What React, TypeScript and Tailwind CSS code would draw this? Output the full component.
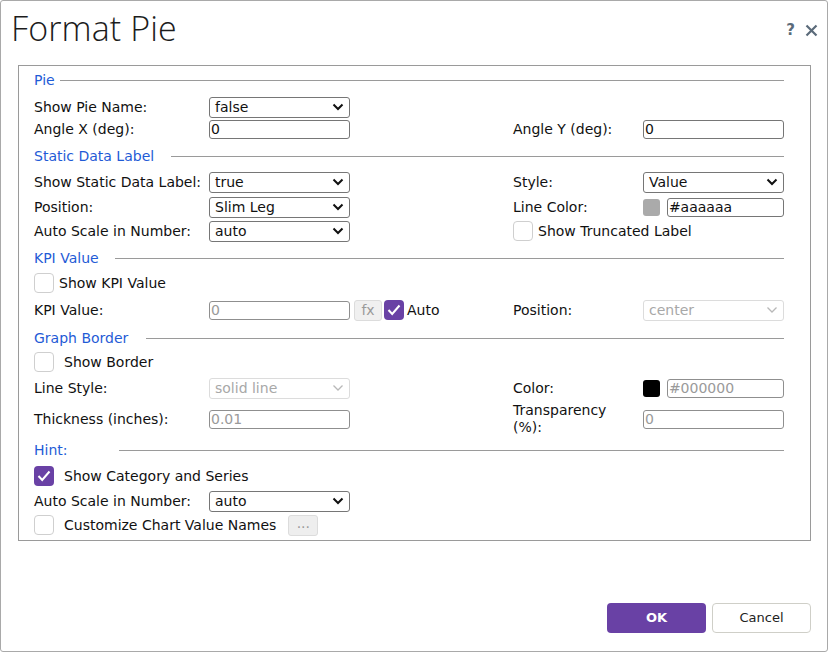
import React from 'react';

// ─── Små byggstenar ──────────────────────────────────────────────────────────
function Chevron({ disabled }: { disabled?: boolean }) {
  return (
    <svg width="12" height="8" viewBox="0 0 12 8" className="shrink-0">
      <path
        d="M1.5 1.5 L6 6 L10.5 1.5"
        fill="none"
        stroke={disabled ? '#b8b8b8' : '#111'}
        strokeWidth={disabled ? 1.3 : 2}
      />
    </svg>
  );
}

function Select({ value, disabled }: { value: string; disabled?: boolean }) {
  return (
    <div
      className={`flex h-[21px] w-[141px] items-center justify-between rounded-[3px] border pl-[5px] pr-[5px] ${
        disabled ? 'border-[#dcdcdc] text-[#a8a8a8]' : 'border-[#767676] text-[#111]'
      }`}
    >
      <span>{value}</span>
      <Chevron disabled={disabled} />
    </div>
  );
}

function Input({ value, disabled, w = 'w-[141px]' }: { value: string; disabled?: boolean; w?: string }) {
  return (
    <div
      className={`flex h-[19px] ${w} items-center rounded-[3px] border pl-[1px] ${
        disabled ? 'border-[#8f8f8f] text-[#9a9a9a]' : 'border-[#767676] text-[#111]'
      }`}
    >
      {value}
    </div>
  );
}

function Check({ checked }: { checked?: boolean }) {
  if (checked) {
    return (
      <div className="flex h-[20px] w-[20px] shrink-0 items-center justify-center rounded-[4px] bg-[#6941a5]">
        <svg width="14" height="12" viewBox="0 0 14 12">
          <path d="M1.5 6 L5.2 10 L12.5 1.5" fill="none" stroke="white" strokeWidth="2" />
        </svg>
      </div>
    );
  }
  return <div className="h-[20px] w-[20px] shrink-0 rounded-[4px] border border-[#cfcfcf] bg-white" />;
}

function Header({ label, w }: { label: string; w: string }) {
  return (
    <div className="flex h-[22px] items-center">
      <span className={`${w} shrink-0 text-[#1f5bd6]`}>{label}</span>
      <div className="h-px flex-1 bg-[#9a9a9a]" />
    </div>
  );
}

function Row({
  mt,
  label,
  control,
  rLabel,
  rControl,
  h = 'h-[22px]',
}: {
  mt: string;
  label?: React.ReactNode;
  control?: React.ReactNode;
  rLabel?: React.ReactNode;
  rControl?: React.ReactNode;
  h?: string;
}) {
  return (
    <div className={`${mt} ${h} grid grid-cols-[175px_141px_163px_130px_141px] items-center`}>
      <div>{label}</div>
      <div>{control}</div>
      <div />
      <div className="leading-[17px]">{rLabel}</div>
      <div>{rControl}</div>
    </div>
  );
}

// ─── Dialog ──────────────────────────────────────────────────────────────────
export default function App() {
  return (
    <div className="relative h-[652px] w-[828px] overflow-hidden rounded-[3px] border border-[#a9a9a9] bg-white font-['DejaVu_Sans',sans-serif] text-[14px] text-[#111]">
      {/* Titel */}
      <div className="flex h-[64px] items-start justify-between pl-[10px] pr-[9px] pt-[2px]">
        <h1 className="font-['Open_Sans',sans-serif] text-[34px] font-light tracking-[0.1px] text-[#1c1c1c]">
          Format Pie
        </h1>
        <div className="mt-[16px] flex items-center gap-[10px] text-[#5b6b7a]">
          <span className="text-[15px] font-bold">?</span>
          <svg width="13" height="13" viewBox="0 0 13 13">
            <path d="M1.5 1.5 L11.5 11.5 M11.5 1.5 L1.5 11.5" stroke="#5b6b7a" strokeWidth="2.2" />
          </svg>
        </div>
      </div>

      {/* Fältgrupp */}
      <div className="ml-[17px] mr-[16px] h-[476px] border border-[#9a9a9a] pb-[4px] pl-[15px] pr-[26px] pt-[3px]">
        <Header label="Pie" w="w-[26px]" />
        <Row mt="mt-[5px]" label="Show Pie Name:" control={<Select value="false" />} />
        <Row
          mt="mt-0"
          label="Angle X (deg):"
          control={<Input value="0" />}
          rLabel="Angle Y (deg):"
          rControl={<Input value="0" />}
        />

        <div className="mt-[5px]">
          <Header label="Static Data Label" w="w-[137px]" />
        </div>
        <Row
          mt="mt-[4px]"
          label="Show Static Data Label:"
          control={<Select value="true" />}
          rLabel="Style:"
          rControl={<Select value="Value" />}
        />
        <Row
          mt="mt-[3px]"
          label="Position:"
          control={<Select value="Slim Leg" />}
          rLabel="Line Color:"
          rControl={
            <div className="flex items-center gap-[7px]">
              <div className="h-[17px] w-[17px] rounded-[3px] bg-[#aaaaaa]" />
              <Input value="#aaaaaa" w="w-[118px]" />
            </div>
          }
        />
        <div className="mt-[2px] grid h-[22px] grid-cols-[175px_141px_163px_271px] items-center">
          <div>Auto Scale in Number:</div>
          <Select value="auto" />
          <div />
          <div className="flex items-center gap-[5px]">
            <Check />
            <span>Show Truncated Label</span>
          </div>
        </div>

        <div className="mt-[5px]">
          <Header label="KPI Value" w="w-[81px]" />
        </div>
        <div className="mt-[3px] flex h-[22px] items-center gap-[5px]">
          <Check />
          <span>Show KPI Value</span>
        </div>
        <div className="mt-[5px] grid h-[22px] grid-cols-[175px_304px_130px_141px] items-center">
          <div>KPI Value:</div>
          <div className="flex items-center">
            <Input value="0" disabled />
            <div className="ml-[4px] flex h-[21px] w-[28px] items-center justify-center rounded-[3px] border border-[#dcdcdc] bg-[#f0f0f0] text-[#9a9a9a]">
              fx
            </div>
            <div className="ml-[2px]">
              <Check checked />
            </div>
            <span className="ml-[3px]">Auto</span>
          </div>
          <div>Position:</div>
          <Select value="center" disabled />
        </div>

        <div className="mt-[6px]">
          <Header label="Graph Border" w="w-[112px]" />
        </div>
        <div className="mt-[2px] flex h-[22px] items-center gap-[10px]">
          <Check />
          <span>Show Border</span>
        </div>
        <Row
          mt="mt-[4px]"
          label="Line Style:"
          control={<Select value="solid line" disabled />}
          rLabel="Color:"
          rControl={
            <div className="flex items-center gap-[7px]">
              <div className="h-[17px] w-[17px] rounded-[3px] bg-black" />
              <Input value="#000000" disabled w="w-[118px]" />
            </div>
          }
        />
        <Row
          mt="mt-[2px]"
          h="h-[36px]"
          label="Thickness (inches):"
          control={<Input value="0.01" disabled />}
          rLabel={
            <>
              Transparency
              <br />
              (%):
            </>
          }
          rControl={<Input value="0" disabled />}
        />

        <div className="mt-[2px]">
          <Header label="Hint:" w="w-[85px]" />
        </div>
        <div className="mt-[4px] flex h-[22px] items-center gap-[10px]">
          <Check checked />
          <span>Show Category and Series</span>
        </div>
        <Row mt="mt-[3px]" label="Auto Scale in Number:" control={<Select value="auto" />} />
        <div className="mt-[2px] flex h-[22px] items-center">
          <Check />
          <span className="ml-[10px]">Customize Chart Value Names</span>
          <div className="ml-[12px] flex h-[21px] w-[30px] items-center justify-center rounded-[3px] border border-[#dcdcdc] bg-[#eeeeee] pb-[4px] text-[#9a9a9a]">
            ...
          </div>
        </div>
      </div>

      {/* Knappar */}
      <div className="mt-[62px] flex justify-end gap-[6px] pr-[16px]">
        <button className="h-[30px] w-[99px] rounded-[4px] bg-[#6941a5] text-[13px] font-bold text-white">OK</button>
        <button className="h-[30px] w-[99px] rounded-[4px] border border-[#cfcfc8] bg-white text-[13px] text-[#222]">
          Cancel
        </button>
      </div>
    </div>
  );
}
